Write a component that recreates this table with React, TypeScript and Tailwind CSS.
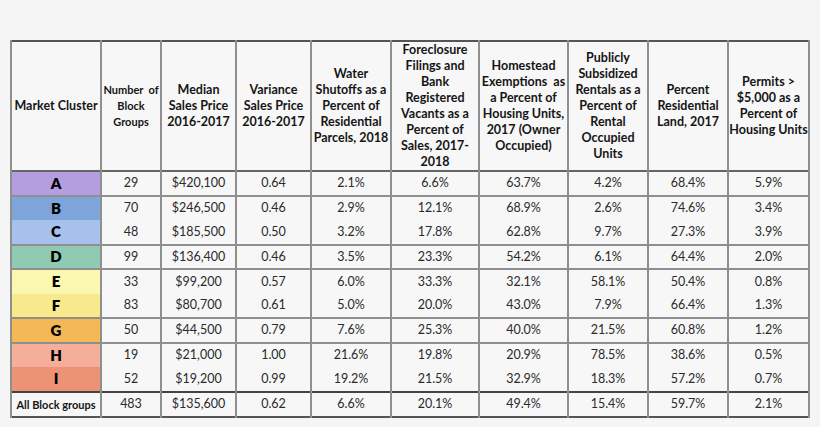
import React from "react";

type Row = {
  label: string;
  color: string;
  values: string[];
  sep: boolean;
};

const widths = [90, 60, 75, 75, 80, 88, 89, 80, 80, 81];

const headers: React.ReactNode[] = [
  <>Market Cluster</>,
  <span className="text-[11px] leading-[14px]">Number&nbsp; of<br />Block<br />Groups</span>,
  <>Median<br />Sales Price<br />2016-2017</>,
  <>Variance<br />Sales Price<br />2016-2017</>,
  <>Water<br />Shutoffs as a<br />Percent of<br />Residential<br />Parcels, 2018</>,
  <>Foreclosure<br />Filings and<br />Bank<br />Registered<br />Vacants as a<br />Percent of<br />Sales, 2017-<br />2018</>,
  <>Homestead<br />Exemptions&nbsp; as<br />a Percent of<br />Housing Units,<br />2017 (Owner<br />Occupied)</>,
  <>Publicly<br />Subsidized<br />Rentals as a<br />Percent of<br />Rental<br />Occupied<br />Units</>,
  <>Percent<br />Residential<br />Land, 2017</>,
  <>Permits &gt;<br />$5,000 as a<br />Percent of<br />Housing Units</>,
];

const rows: Row[] = [
  { label: "A", color: "bg-[#b59ee0]", sep: true, values: ["29", "$420,100", "0.64", "2.1%", "6.6%", "63.7%", "4.2%", "68.4%", "5.9%"] },
  { label: "B", color: "bg-[#7ea4dc]", sep: true, values: ["70", "$246,500", "0.46", "2.9%", "12.1%", "68.9%", "2.6%", "74.6%", "3.4%"] },
  { label: "C", color: "bg-[#a6c1ec]", sep: false, values: ["48", "$185,500", "0.50", "3.2%", "17.8%", "62.8%", "9.7%", "27.3%", "3.9%"] },
  { label: "D", color: "bg-[#8ecbb2]", sep: true, values: ["99", "$136,400", "0.46", "3.5%", "23.3%", "54.2%", "6.1%", "64.4%", "2.0%"] },
  { label: "E", color: "bg-[#fbf7b0]", sep: true, values: ["33", "$99,200", "0.57", "6.0%", "33.3%", "32.1%", "58.1%", "50.4%", "0.8%"] },
  { label: "F", color: "bg-[#f8ea8c]", sep: false, values: ["83", "$80,700", "0.61", "5.0%", "20.0%", "43.0%", "7.9%", "66.4%", "1.3%"] },
  { label: "G", color: "bg-[#f5b856]", sep: true, values: ["50", "$44,500", "0.79", "7.6%", "25.3%", "40.0%", "21.5%", "60.8%", "1.2%"] },
  { label: "H", color: "bg-[#f4ae9a]", sep: true, values: ["19", "$21,000", "1.00", "21.6%", "19.8%", "20.9%", "78.5%", "38.6%", "0.5%"] },
  { label: "I", color: "bg-[#ec9375]", sep: false, values: ["52", "$19,200", "0.99", "19.2%", "21.5%", "32.9%", "18.3%", "57.2%", "0.7%"] },
];

const total = ["483", "$135,600", "0.62", "6.6%", "20.1%", "49.4%", "15.4%", "59.7%", "2.1%"];

export default function App() {
  return (
    <div
      className="w-[820px] h-[427px] bg-[#f5f5f5] pt-[40px] pl-[10px] text-[#151515]"
      style={{ fontFamily: "Lato, 'Open Sans', sans-serif" }}
    >
      <table className="border-collapse table-fixed border-2 border-[#555] bg-[#f7f7f7]">
        <colgroup>
          {widths.map((w, i) => (
            <col key={i} style={{ width: w }} />
          ))}
        </colgroup>
        <thead>
          <tr className="h-[129px] border-b-2 border-[#666]">
            {headers.map((h, i) => (
              <th
                key={i}
                className="border-x-2 border-[#8f8f8f] px-0 text-center align-middle text-[12.5px] font-bold leading-[16px] whitespace-nowrap"
              >
                {h}
              </th>
            ))}
          </tr>
        </thead>
        <tbody>
          {rows.map((r) => (
            <tr key={r.label} className={`h-[24.5px] ${r.sep ? "border-t-2 border-[#8f8f8f]" : ""}`}>
              <td className={`${r.color} border-x-2 border-[#8f8f8f] text-center text-[15px] font-extrabold leading-none text-black`}>
                {r.label}
              </td>
              {r.values.map((v, i) => (
                <td key={i} className="border-x-2 border-[#8f8f8f] text-center text-[12.5px] leading-none text-[#2a2a2a]">
                  {v}
                </td>
              ))}
            </tr>
          ))}
          <tr className="h-[25px] border-t-2 border-[#444]">
            <td className="border-x-2 border-[#8f8f8f] text-center text-[11px] font-bold leading-none whitespace-nowrap">
              All Block groups
            </td>
            {total.map((v, i) => (
              <td key={i} className="border-x-2 border-[#8f8f8f] text-center text-[12.5px] leading-none text-[#2a2a2a]">
                {v}
              </td>
            ))}
          </tr>
        </tbody>
      </table>
    </div>
  );
}
